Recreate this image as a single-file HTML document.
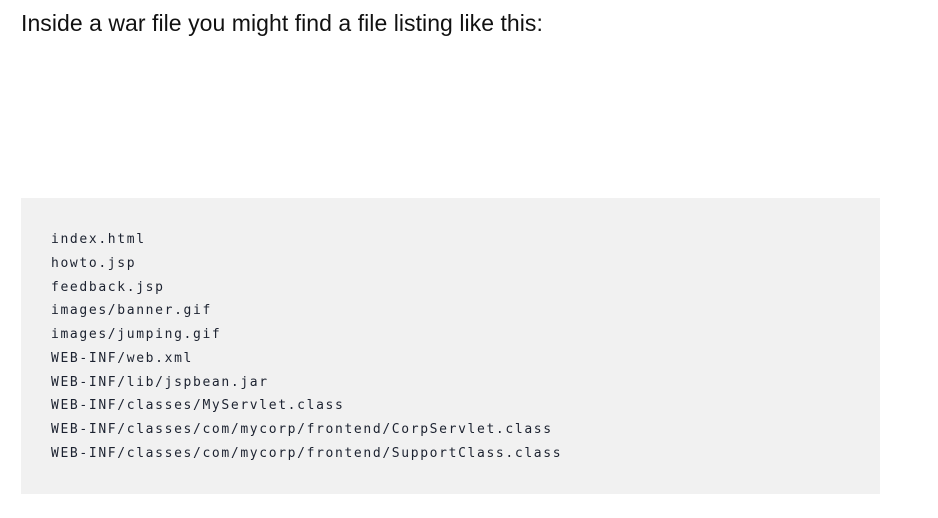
<!DOCTYPE html>
<html><head><style>
body{margin:0;background:#fff;width:938px;height:518px;overflow:hidden;}
h1{position:absolute;left:21px;top:8px;margin:0;font:400 23px/30px "Liberation Sans",sans-serif;color:#111;letter-spacing:0.05px;}
.box{position:absolute;left:21px;top:198px;width:859px;height:296px;background:#f1f1f1;}
pre{position:absolute;left:30px;top:30px;margin:0;font:13px/23.75px "DejaVu Sans Mono",monospace;letter-spacing:1.64px;color:#1c2230;}
</style></head><body>
<h1>Inside a war file you might find a file listing like this:</h1>
<div class="box"><pre>index.html
howto.jsp
feedback.jsp
images/banner.gif
images/jumping.gif
WEB-INF/web.xml
WEB-INF/lib/jspbean.jar
WEB-INF/classes/MyServlet.class
WEB-INF/classes/com/mycorp/frontend/CorpServlet.class
WEB-INF/classes/com/mycorp/frontend/SupportClass.class</pre></div>
</body></html>
